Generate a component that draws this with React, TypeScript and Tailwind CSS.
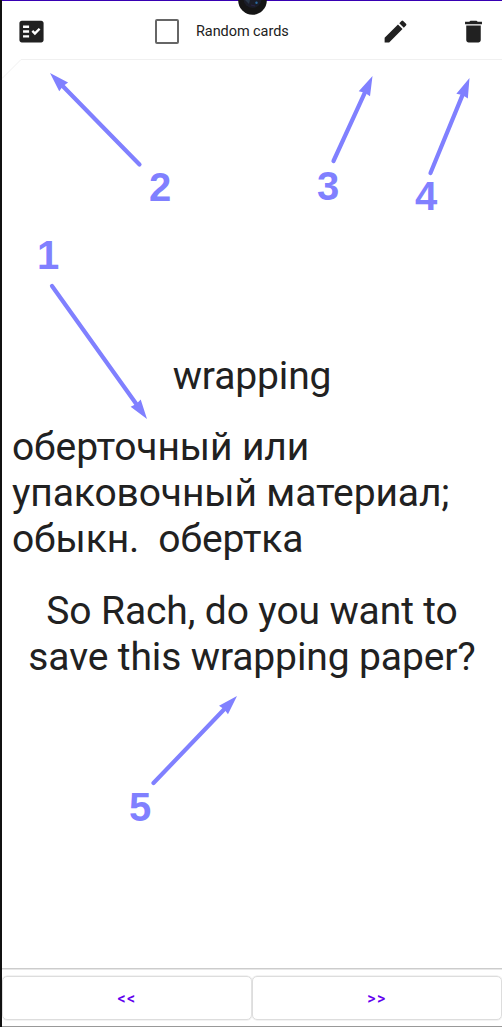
import { MdDelete, MdEdit, MdFactCheck } from "react-icons/md";

const arrows = [
  { from: [52, 286], to: [147, 419] },
  { from: [139.5, 164.5], to: [50, 73] },
  { from: [333.5, 161], to: [372.5, 76] },
  { from: [430.5, 173], to: [469.5, 78] },
  { from: [153.5, 783], to: [237, 696] },
];

function Arrow({ from, to }: { from: number[]; to: number[] }) {
  const length = Math.hypot(to[0] - from[0], to[1] - from[1]);
  const angle = (Math.atan2(to[1] - from[1], to[0] - from[0]) * 180) / Math.PI;
  return (
    <g transform={`translate(${to[0]} ${to[1]}) rotate(${angle})`}>
      <path d={`M${-length} 0H-15`} stroke="#8080ff" strokeWidth="4.2" strokeLinecap="round" />
      <path d="M0 0L-19.5 -6.2L-18.5 0L-19.5 6.2Z" fill="#8080ff" />
    </g>
  );
}

function Annotations() {
  const label = "absolute font-['Liberation_Sans',sans-serif] text-[40px] leading-[46px] font-bold text-[#8080ff]";
  return (
    <div className="pointer-events-none absolute inset-0">
      <svg className="absolute inset-0" width="502" height="1027" viewBox="0 0 502 1027" fill="none">
        {arrows.map((arrow, i) => (
          <Arrow key={i} from={arrow.from} to={arrow.to} />
        ))}
      </svg>
      <span className={`${label} left-[37px] top-[232px]`}>1</span>
      <span className={`${label} left-[149px] top-[164px]`}>2</span>
      <span className={`${label} left-[317px] top-[163px]`}>3</span>
      <span className={`${label} left-[415px] top-[173px]`}>4</span>
      <span className={`${label} left-[129px] top-[784px]`}>5</span>
    </div>
  );
}

function Camera() {
  return (
    <svg className="absolute left-[238px] top-0" width="30" height="16" viewBox="0 0 30 16">
      <circle cx="14.5" cy="0.5" r="14.3" fill="#151515" />
      <circle cx="14.5" cy="-1" r="9" fill="#1b1d28" />
      <path d="M7 0H12L11 4Z" fill="#293747" />
      <circle cx="18.5" cy="2.8" r="1.2" fill="#286a9f" />
      <path d="M13 5L17 6" stroke="#282348" />
    </svg>
  );
}

export default function App() {
  return (
    <div className="relative flex h-[1027px] w-[502px] flex-col overflow-hidden border-l-2 border-[#111111] bg-white font-[Roboto,sans-serif] text-[#212121]">
      <div className="h-px shrink-0 bg-[#3700b3]" />
      <header className="flex h-[58px] shrink-0 items-center pt-[2px]">
        <MdFactCheck className="ml-[15px] size-[29px] shrink-0" />
        <label className="ml-[109px] flex items-center">
          <span className="h-[25px] w-[24px] rounded-[2px] border-2 border-[#666666]" />
          <span className="ml-[17px] w-[110px] pt-[2px] text-[14.5px] leading-5 tracking-[-0.07px]">Random cards</span>
        </label>
        <MdEdit className="ml-[75px] size-[29px] shrink-0" />
        <MdDelete className="ml-[49px] size-[29px] shrink-0" />
      </header>
      <svg className="block shrink-0" width="500" height="22" viewBox="0 0 500 22" fill="none">
        <path d="M0 19.5L19 0.5H500" stroke="#f0f0f0" />
      </svg>

      <main className="flex flex-1 flex-col px-[10px] pt-[272px] text-[39px] leading-[46px] tracking-[-0.12px]">
        <h1 className="text-center">wrapping</h1>
        <p className="mt-[25px] whitespace-pre">
          {"оберточный или\nупаковочный материал;\nобыкн.  обертка"}
        </p>
        <p className="mt-[26px] whitespace-pre text-center">
          {"So Rach, do you want to\nsave this wrapping paper?"}
        </p>
      </main>

      <footer className="shrink-0">
        <div className="h-[2px] border-t border-[#cccccc] bg-[#e7e7e7]" />
        <div className="flex h-[56px] pt-[6px] pb-[6px] text-[16px] font-medium tracking-[1.4px] text-[#6200ee]">
          <button className="flex h-[44px] flex-1 items-center justify-center rounded-[5px] border border-[#dddddd] pt-[2px] shadow-[0_0_0_0.5px_#e8e8e8]">
            &lt;&lt;
          </button>
          <button className="flex h-[44px] flex-1 items-center justify-center rounded-[5px] border border-[#dddddd] pt-[2px] shadow-[0_0_0_0.5px_#e8e8e8]">
            &gt;&gt;
          </button>
        </div>
        <div className="h-px bg-[#999999]" />
      </footer>
      <div className="absolute inset-y-0 -left-[2px] w-[502px]">
        <Annotations />
        <Camera />
      </div>
    </div>
  );
}
